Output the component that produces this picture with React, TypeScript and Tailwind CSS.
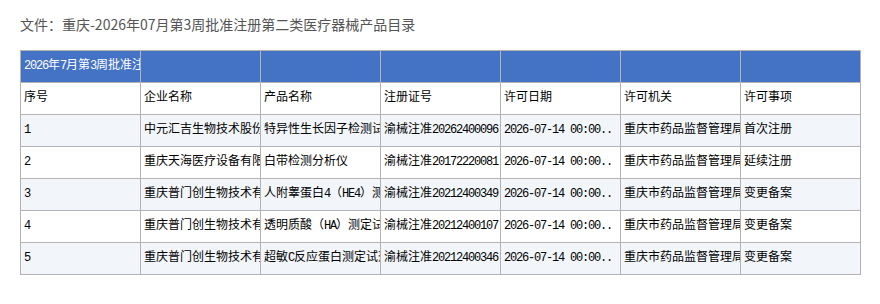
import React from "react";

const cjk = "font-['Noto_Sans_CJK_SC','Noto_Sans',sans-serif]";

interface Row {
  no: string;
  company: string;
  product: React.ReactNode;
  regNo: string;
  date: string;
  org: string;
  item: string;
}

const Num = ({ children }: { children: React.ReactNode }) => (
  <span className="font-['Liberation_Mono',monospace] text-[12px] tracking-[-1.2px]">
    {children}
  </span>
);

const rows: Row[] = [
  {
    no: "1",
    company: "中元汇吉生物技术股份有限公司",
    product: "特异性生长因子检测试剂盒",
    regNo: "20262400096",
    date: "2026-07-14 00:00..",
    org: "重庆市药品监督管理局",
    item: "首次注册",
  },
  {
    no: "2",
    company: "重庆天海医疗设备有限公司",
    product: "白带检测分析仪",
    regNo: "20172220081",
    date: "2026-07-14 00:00..",
    org: "重庆市药品监督管理局",
    item: "延续注册",
  },
  {
    no: "3",
    company: "重庆普门创生物技术有限公司",
    product: (
      <>
        人附睾蛋白<Num>4</Num>（<Num>HE4</Num>）测定试剂盒
      </>
    ),
    regNo: "20212400349",
    date: "2026-07-14 00:00..",
    org: "重庆市药品监督管理局",
    item: "变更备案",
  },
  {
    no: "4",
    company: "重庆普门创生物技术有限公司",
    product: (
      <>
        透明质酸（<Num>HA</Num>）测定试剂盒
      </>
    ),
    regNo: "20212400107",
    date: "2026-07-14 00:00..",
    org: "重庆市药品监督管理局",
    item: "变更备案",
  },
  {
    no: "5",
    company: "重庆普门创生物技术有限公司",
    product: (
      <>
        超敏<Num>C</Num>反应蛋白测定试剂盒
      </>
    ),
    regNo: "20212400346",
    date: "2026-07-14 00:00..",
    org: "重庆市药品监督管理局",
    item: "变更备案",
  },
];

const headers = ["序号", "企业名称", "产品名称", "注册证号", "许可日期", "许可机关", "许可事项"];

const cell =
  "border border-[#b3b3b3] h-[32px] px-[3px] pt-[5px] align-top whitespace-nowrap overflow-hidden text-[12px] leading-[16px]";

export default function App() {
  return (
    <div className={`w-[880px] h-[304px] bg-white ${cjk}`}>
      <div className="pl-[20px] pt-[14px] h-[50px] text-[14px] leading-[20px] text-[#555]">
        文件：重庆-2026年07月第3周批准注册第二类医疗器械产品目录
      </div>
      <table className="ml-[20px] w-[841px] table-fixed border-collapse">
        <colgroup>
          {headers.map((h) => (
            <col key={h} className="w-[120px]" />
          ))}
        </colgroup>
        <tbody>
          <tr className="bg-[#4472c4] text-white">
            <td className={cell}>
              <Num>2026</Num>年<Num>7</Num>月第<Num>3</Num>周批准注册第二类医疗器械产品目录
            </td>
            {headers.slice(1).map((h) => (
              <td key={h} className={cell} />
            ))}
          </tr>
          <tr className="bg-white text-black">
            {headers.map((h) => (
              <td key={h} className={cell}>
                {h}
              </td>
            ))}
          </tr>
          {rows.map((r, i) => (
            <tr key={r.no} className={i % 2 === 0 ? "bg-[#f2f6fa] text-black" : "bg-white text-black"}>
              <td className={cell}>
                <Num>{r.no}</Num>
              </td>
              <td className={cell}>{r.company}</td>
              <td className={cell}>{r.product}</td>
              <td className={cell}>
                渝械注准<Num>{r.regNo}</Num>
              </td>
              <td className={cell}>
                <Num>{r.date}</Num>
              </td>
              <td className={cell}>{r.org}</td>
              <td className={cell}>{r.item}</td>
            </tr>
          ))}
        </tbody>
      </table>
    </div>
  );
}
